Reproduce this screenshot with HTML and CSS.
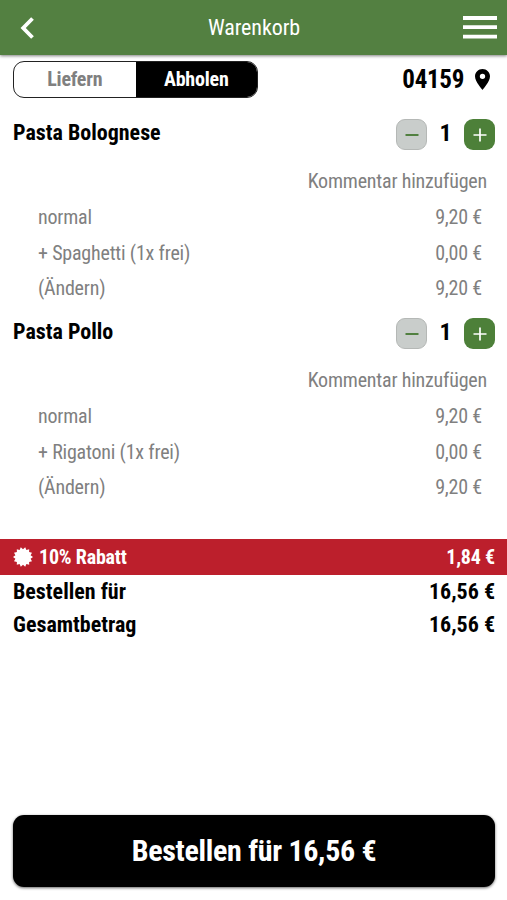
FILE: index.html
```html
<!DOCTYPE html>
<html lang="de">
<head>
    <meta charset="UTF-8">
    <meta name="viewport" content="width=device-width, initial-scale=1.0">
    <title>Warenkorb</title>
    <link rel="stylesheet" href="styles.css">
</head>
<body>
    <header class="topbar">
        <svg class="back" width="14" height="22" viewBox="0 0 14 22">
            <path d="M12.500 1.500 L3.200 11 L12.500 20.500" fill="none" stroke="#fff" stroke-width="3.800"/>
        </svg>
        <h1 class="title">Warenkorb</h1>
        <svg class="menu" width="34" height="23" viewBox="0 0 34 23">
            <path d="M0 2H34M0 11.200H34M0 20.600H34" stroke="#fff" stroke-width="3.800"/>
        </svg>
    </header>

    <div class="delivery">
        <div class="toggle">
            <span class="option">Liefern</span>
            <span class="option active">Abholen</span>
        </div>
        <div class="zip">
            <span>04159</span>
            <svg width="15" height="21" viewBox="5 2 14 20" preserveAspectRatio="none">
                <path fill="#000" d="M12 2C8.100 2 5 5.100 5 9c0 5.200 7 13 7 13s7-7.800 7-13c0-3.900-3.100-7-7-7zm0 9.500a2.500 2.500 0 1 1 0-5 2.500 2.500 0 0 1 0 5z"/>
            </svg>
        </div>
    </div>

    <main class="cart">
        <section class="item">
            <div class="item-head">
                <h2>Pasta Bolognese</h2>
                <div class="stepper">
                    <button class="step minus"><svg width="14" height="14" viewBox="0 0 14 14"><path d="M0.500 7H13.500" stroke="#518040" stroke-width="2"/></svg></button>
                    <span class="count">1</span>
                    <button class="step plus"><svg width="14" height="14" viewBox="0 0 14 14"><path d="M0.500 7H13.500M7 0.500V13.500" stroke="#fff" stroke-width="1.700"/></svg></button>
                </div>
            </div>
            <div class="comment">Kommentar hinzufügen</div>
            <div class="row"><span>normal</span><span>9,20 €</span></div>
            <div class="row"><span>+ Spaghetti (1x frei)</span><span>0,00 €</span></div>
            <div class="row"><span>(Ändern)</span><span>9,20 €</span></div>
        </section>

        <section class="item">
            <div class="item-head">
                <h2>Pasta Pollo</h2>
                <div class="stepper">
                    <button class="step minus"><svg width="14" height="14" viewBox="0 0 14 14"><path d="M0.500 7H13.500" stroke="#518040" stroke-width="2"/></svg></button>
                    <span class="count">1</span>
                    <button class="step plus"><svg width="14" height="14" viewBox="0 0 14 14"><path d="M0.500 7H13.500M7 0.500V13.500" stroke="#fff" stroke-width="1.700"/></svg></button>
                </div>
            </div>
            <div class="comment">Kommentar hinzufügen</div>
            <div class="row"><span>normal</span><span>9,20 €</span></div>
            <div class="row"><span>+ Rigatoni (1x frei)</span><span>0,00 €</span></div>
            <div class="row"><span>(Ändern)</span><span>9,20 €</span></div>
        </section>
    </main>

    <div class="discount">
        <svg width="20" height="20" viewBox="-10 -10 20 20">
            <path fill="#fff" d="M10 0L7.600 1.700L9 4.300L6.100 4.900L6.200 7.800L3.400 7L2.200 9.700L0 7.800L-2.200 9.700L-3.400 7L-6.200 7.800L-6.100 4.900L-9 4.300L-7.600 1.700L-10 0L-7.600 -1.700L-9 -4.300L-6.100 -4.900L-6.200 -7.800L-3.400 -7L-2.200 -9.700L0 -7.800L2.200 -9.700L3.400 -7L6.200 -7.800L6.100 -4.900L9 -4.300L7.600 -1.700Z"/>
        </svg>
        <span>10% Rabatt</span>
        <span class="amount">1,84 €</span>
    </div>
    <div class="total"><span>Bestellen für</span><span>16,56 €</span></div>
    <div class="total"><span>Gesamtbetrag</span><span>16,56 €</span></div>

    <button class="order">Bestellen für 16,56 €</button>
</body>
</html>
```
FILE: styles.css
```css
* {
    box-sizing: border-box;
}
body {
    margin: 0;
    height: 900px;
    display: flex;
    flex-direction: column;
    overflow: hidden;
    background: #fff;
    color: #000;
    font-family: "Roboto Condensed", Roboto, "Liberation Sans", sans-serif;
    font-stretch: 75%;
    white-space: nowrap;
}
h1, h2 {
    margin: 0;
}
button {
    font: inherit;
    border: none;
    padding: 0;
}
.topbar {
    height: 55px;
    flex: none;
    display: flex;
    align-items: center;
    justify-content: space-between;
    padding: 0 10px 0 20px;
    background: #538041;
    color: #fff;
    box-shadow: 0 1px 3px rgba(0,0,0,0.5);
}
.title {
    font-size: 22px;
    font-weight: 400;
    letter-spacing: -0.1px;
}
.back {
    margin-right: 11px;
}
.delivery {
    display: flex;
    align-items: center;
    justify-content: space-between;
    height: 37px;
    margin: 6px 17px 0 13px;
}
.toggle {
    display: flex;
    width: 245px;
    height: 37px;
    border: 1px solid #222;
    border-radius: 11px;
    overflow: hidden;
}
.option {
    width: 122px;
    line-height: 35px;
    text-align: center;
    font-size: 20px;
    font-weight: 700;
    letter-spacing: -0.2px;
    color: #808080;
}
.option.active {
    background: #000;
    color: #fff;
}
.zip {
    display: flex;
    align-items: center;
    gap: 11px;
    font-size: 25px;
    font-weight: 700;
    letter-spacing: -0.3px;
}
.cart {
    margin-top: 8px;
}
.item {
    height: 199px;
    padding: 13px 12px 0 13px;
}
.item-head {
    display: flex;
    justify-content: space-between;
    height: 31px;
    margin-bottom: 13px;
}
.item-head h2 {
    font-size: 22px;
    font-weight: 700;
    line-height: 27px;
}
.stepper {
    display: flex;
    align-items: center;
}
.step {
    display: flex;
    align-items: center;
    justify-content: center;
    width: 31px;
    height: 31px;
    border-radius: 9px;
}
.minus {
    background: #c9cdcb;
    border: 1px solid #b5b8b6;
}
.plus {
    background: #4d8039;
}
.count {
    width: 37px;
    text-align: center;
    line-height: 29px;
    padding-bottom: 2px;
    font-size: 24px;
    font-weight: 700;
}
.comment {
    height: 36px;
    line-height: 36px;
    padding-right: 8px;
    text-align: right;
    font-size: 20px;
    letter-spacing: -0.2px;
    color: #808080;
}
.row {
    display: flex;
    justify-content: space-between;
    height: 35.5px;
    line-height: 36px;
    padding: 0 13px 0 25px;
    font-size: 20px;
    letter-spacing: -0.2px;
    color: #808080;
}
.discount {
    display: flex;
    align-items: center;
    gap: 6px;
    height: 36px;
    margin-top: 35px;
    padding: 0 12px 0 13px;
    background: #bc1f2c;
    color: #fff;
    font-size: 20px;
    font-weight: 700;
    letter-spacing: -0.2px;
}
.amount {
    margin-left: auto;
}
.total {
    display: flex;
    justify-content: space-between;
    height: 33px;
    line-height: 34px;
    padding: 0 12px 0 13px;
    font-size: 22px;
    font-weight: 700;
}
.order {
    height: 72px;
    margin: auto 12px 13px 13px;
    padding-bottom: 2px;
    border-radius: 11px;
    background: #000;
    color: #fff;
    font-size: 30px;
    font-weight: 700;
    letter-spacing: -0.3px;
    box-shadow: 0 1px 3px rgba(0,0,0,0.6);
}
```
